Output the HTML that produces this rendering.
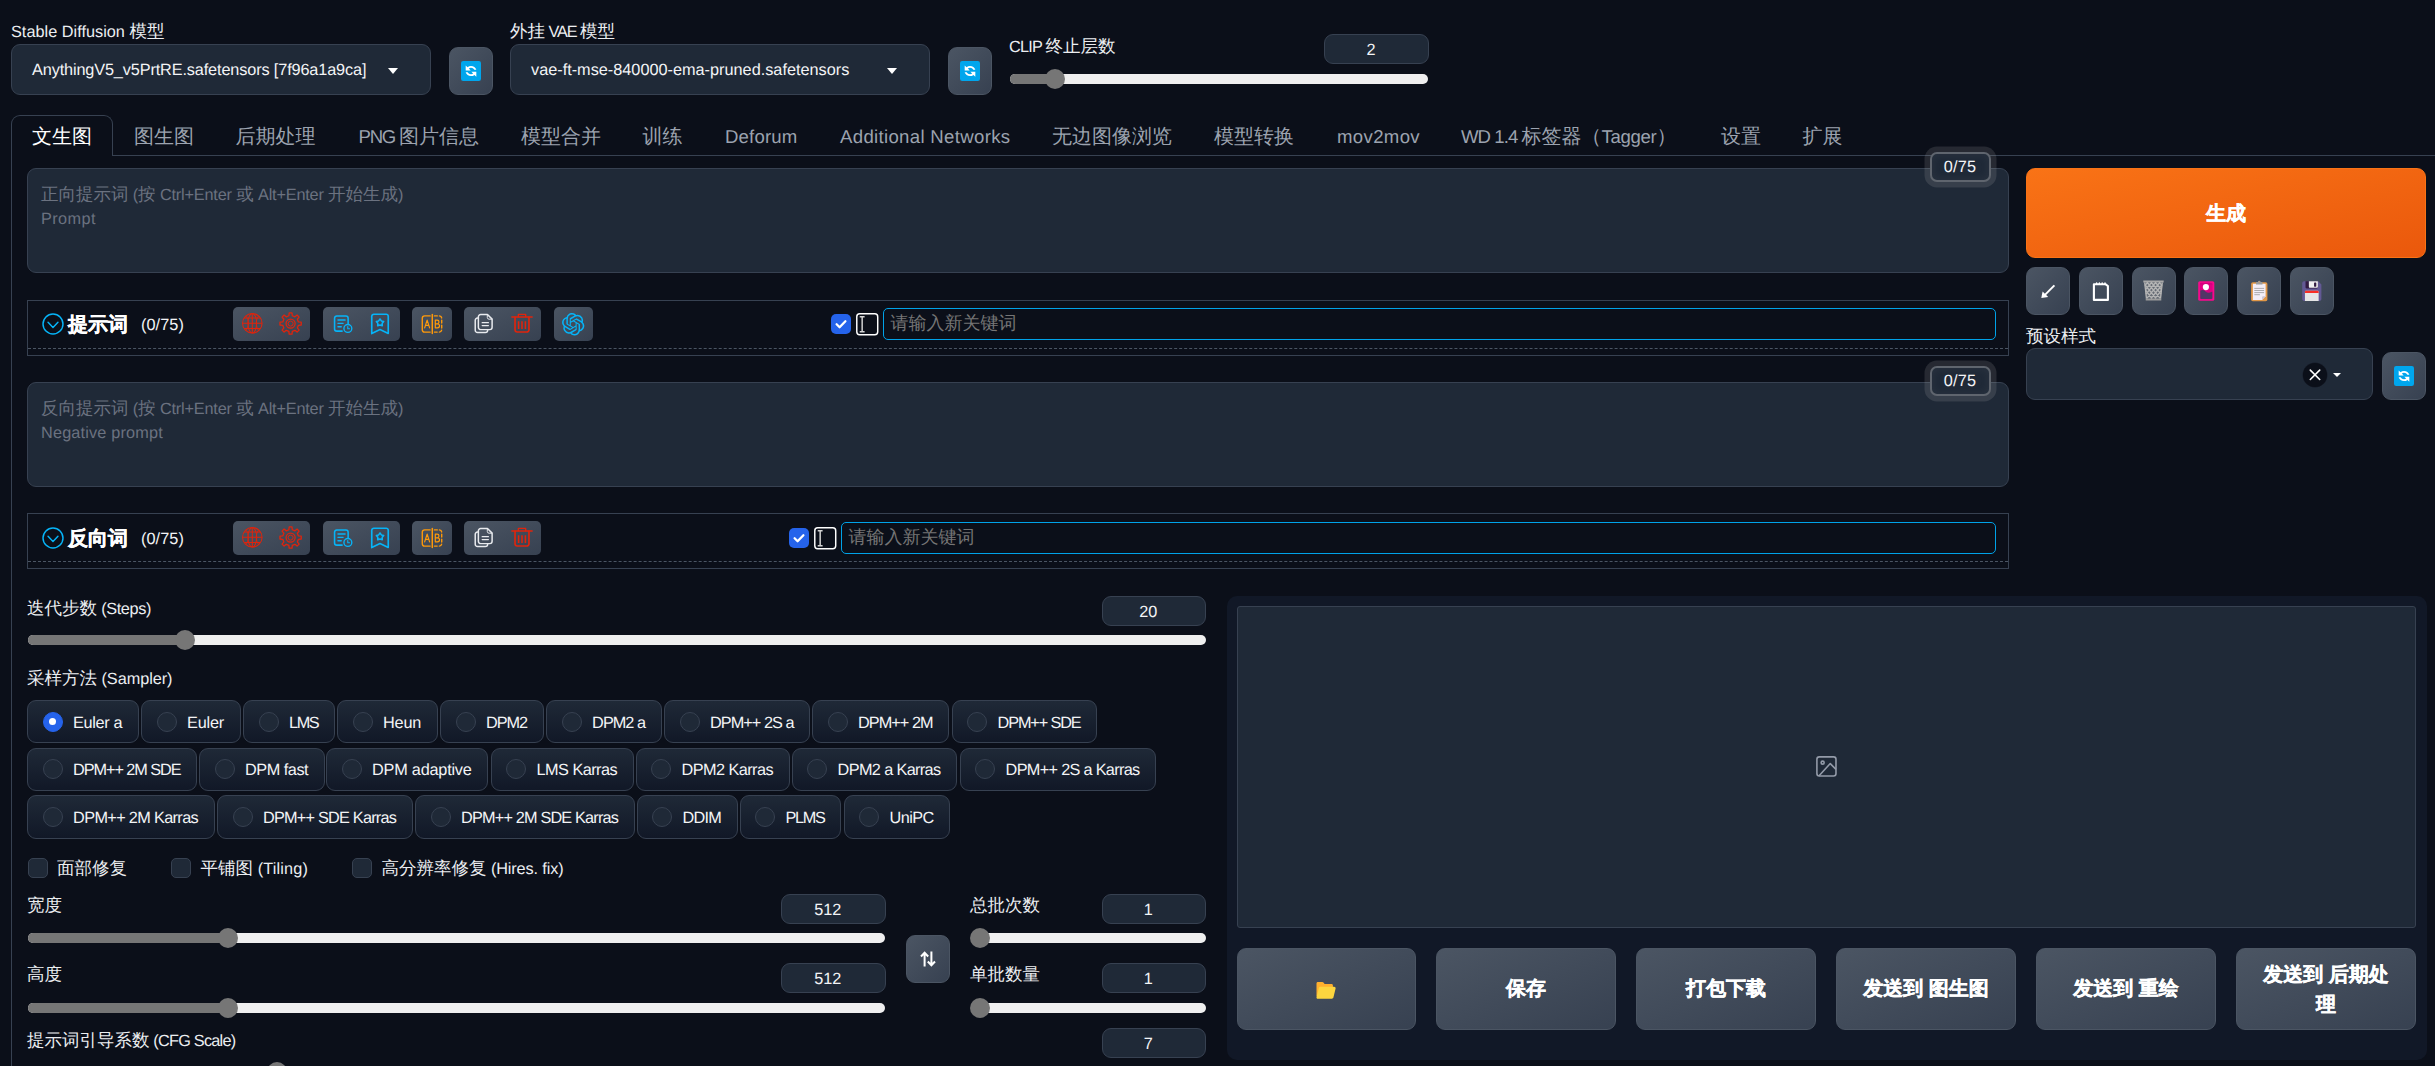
<!DOCTYPE html><html lang="zh"><head><meta charset="utf-8"><title>Stable Diffusion</title><style>
*{box-sizing:border-box;margin:0;padding:0}
html,body{width:2435px;height:1066px;overflow:hidden;background:#0b0f19}
body{position:relative;text-rendering:geometricPrecision;font-family:"Liberation Sans",sans-serif;color:#f3f4f6;font-size:17.5px;line-height:1}
.a{position:absolute;white-space:nowrap}
.lbl{position:absolute;white-space:nowrap;font-size:17.5px;line-height:24px;color:#eceef1}
.inp{position:absolute;background:#1f2937;border:1px solid #374151;border-radius:9px}
.num{position:absolute;padding-right:11px;background:#1f2937;border:1px solid #374151;border-radius:9px;text-align:center;font-size:17.5px;line-height:28px;color:#f3f4f6;height:30px}
.btn{position:absolute;border:1px solid #4b5563;border-radius:9px;background:linear-gradient(to bottom right,#4b5563,#374151)}
.tab{position:absolute;top:116.5px;height:41px;font-size:20px;line-height:40px;color:#9ca3af;white-space:nowrap}
.trk{position:absolute;height:10px;border-radius:5px;background:#efefef}
.fil{position:absolute;height:10px;border-radius:5px;background:#767676}
.thb{position:absolute;width:20px;height:20px;border-radius:50%;background:#767676}
.chip{position:absolute;height:43px;border:1px solid #374151;border-radius:9px;background:linear-gradient(to top,#111827,#1f2937);font-size:17.5px;line-height:41px;white-space:nowrap;color:#f3f4f6}
.chip i{position:absolute;left:14.5px;top:10.5px;width:20px;height:20px;border-radius:50%;border:1px solid #374151;background:#1f2937}
.chip i.on{background:#2563eb;border-color:#2563eb}
.chip i.on:after{content:"";position:absolute;left:5.5px;top:5.5px;width:7px;height:7px;border-radius:50%;background:#fff}
.chip span.t{position:absolute;left:45px;top:.7px}
.cb{position:absolute;width:20px;height:20px;border:1px solid #374151;border-radius:5px;background:#1f2937}
.ph{position:absolute;white-space:nowrap;font-size:17.5px;line-height:24.5px;color:#6b7280}
.grp{position:absolute;height:34px;border-radius:5px;background:linear-gradient(to bottom right,#4b5563,#374151)}
.big{position:absolute;-webkit-text-stroke:.35px #fff;border:1px solid #4b5563;border-radius:9px;background:linear-gradient(to bottom right,#4b5563,#374151);color:#fff;font-weight:bold;font-size:20px;text-align:center;white-space:nowrap}
svg{position:absolute;overflow:visible}
</style></head><body>
<div class="lbl" style="left:11px;top:19px"><span style="font-size:16.28px;letter-spacing:0.017px">Stable Diffusion </span>模型</div>
<div class="inp" style="left:11px;top:44px;width:420px;height:51px"></div>
<div class="a" style="left:32px;top:57px;font-size:17.5px;line-height:24px;color:#f3f4f6"><span style="font-size:16.28px;letter-spacing:-0.132px">AnythingV5_v5PrtRE.safetensors [7f96a1a9ca]</span></div>
<div class="a" style="left:388px;top:68px;width:0;height:0;border-left:5.5px solid transparent;border-right:5.5px solid transparent;border-top:6px solid #fff"></div>
<div class="btn" style="left:449px;top:47px;width:44px;height:48px"></div>
<svg style="left:460.5px;top:61px" width="20" height="20" viewBox="0 0 32 32"><rect x="0" y="0" width="32" height="32" rx="3.5" fill="#00a6ed"/><path d="M7.5 7v8h8l-2.9-2.9c.9-.8 2.1-1.2 3.4-1.2 2.300 0 4.300 1.300 5.300 3.200h3.300c-1.200-3.600-4.600-6.200-8.600-6.200-2.100 0-4 .7-5.500 1.900z" fill="#fff"/><path d="M24.500 25v-8h-8l2.900 2.900c-.9.800-2.100 1.200-3.400 1.200-2.300 0-4.300-1.300-5.300-3.200h-3.300c1.200 3.600 4.600 6.200 8.600 6.200 2.100 0 4-.7 5.500-1.900z" fill="#fff"/></svg>
<div class="lbl" style="left:510px;top:19px">外挂<span style="font-size:16.28px;letter-spacing:-1.081px"> VAE </span>模型</div>
<div class="inp" style="left:510px;top:44px;width:420px;height:51px"></div>
<div class="a" style="left:531px;top:57px;font-size:17.5px;line-height:24px;color:#f3f4f6"><span style="font-size:16.28px;letter-spacing:0.002px">vae-ft-mse-840000-ema-pruned.safetensors</span></div>
<div class="a" style="left:887px;top:68px;width:0;height:0;border-left:5.5px solid transparent;border-right:5.5px solid transparent;border-top:6px solid #fff"></div>
<div class="btn" style="left:948px;top:47px;width:44px;height:48px"></div>
<svg style="left:959.5px;top:61px" width="20" height="20" viewBox="0 0 32 32"><rect x="0" y="0" width="32" height="32" rx="3.5" fill="#00a6ed"/><path d="M7.5 7v8h8l-2.9-2.9c.9-.8 2.1-1.2 3.4-1.2 2.300 0 4.300 1.300 5.300 3.200h3.300c-1.200-3.600-4.600-6.200-8.600-6.200-2.100 0-4 .7-5.500 1.900z" fill="#fff"/><path d="M24.500 25v-8h-8l2.900 2.900c-.9.800-2.100 1.200-3.400 1.200-2.300 0-4.300-1.300-5.300-3.200h-3.300c1.200 3.600 4.600 6.200 8.600 6.200 2.100 0 4-.7 5.500-1.900z" fill="#fff"/></svg>
<div class="lbl" style="left:1009px;top:34px"><span style="font-size:16.28px;letter-spacing:-0.782px">CLIP </span>终止层数</div>
<div class="num" style="left:1324px;top:34px;width:105px"><span style="font-size:16.28px;letter-spacing:0.000px">2</span></div>
<div class="trk" style="left:1010px;top:74px;width:418px"></div>
<div class="fil" style="left:1010px;top:74px;width:45px"></div>
<div class="thb" style="left:1045px;top:69px"></div>
<div class="a" style="left:11px;top:155px;width:2424px;height:1px;background:#374151"></div>
<div class="a" style="left:11px;top:155px;width:1px;height:911px;background:#374151"></div>
<div class="a" style="left:11px;top:115px;width:102px;height:41px;border:1px solid #374151;border-bottom:none;border-radius:9px 9px 0 0;background:#0b0f19"></div>
<div class="tab" style="left:32px;color:#fff">文生图</div>
<div class="tab" style="left:134px">图生图</div>
<div class="tab" style="left:235.5px">后期处理</div>
<div class="tab" style="left:358.5px"><span style="font-size:18.60px;letter-spacing:-1.244px">PNG </span>图片信息</div>
<div class="tab" style="left:521px">模型合并</div>
<div class="tab" style="left:642.5px">训练</div>
<div class="tab" style="left:725px"><span style="font-size:18.60px;letter-spacing:0.168px">Deforum</span></div>
<div class="tab" style="left:840px"><span style="font-size:18.60px;letter-spacing:0.322px">Additional Networks</span></div>
<div class="tab" style="left:1052px">无边图像浏览</div>
<div class="tab" style="left:1214px">模型转换</div>
<div class="tab" style="left:1337px"><span style="font-size:18.60px;letter-spacing:0.339px">mov2mov</span></div>
<div class="tab" style="left:1461px"><span style="font-size:18.60px;letter-spacing:-0.954px">WD 1.4 </span>标签器（<span style="font-size:18.60px;letter-spacing:-0.312px">Tagger</span>）</div>
<div class="tab" style="left:1721px">设置</div>
<div class="tab" style="left:1802.5px">扩展</div>
<div class="inp" style="left:27px;top:168px;width:1982px;height:105px"></div>
<div class="ph" style="left:41px;top:181.5px">正向提示词<span style="font-size:16.28px;letter-spacing:-0.179px"> (</span>按<span style="font-size:16.28px;letter-spacing:-0.179px"> Ctrl+Enter </span>或<span style="font-size:16.28px;letter-spacing:-0.179px"> Alt+Enter </span>开始生成<span style="font-size:16.28px;letter-spacing:-0.179px">)</span></div>
<div class="ph" style="left:41px;top:206px"><span style="font-size:16.28px;letter-spacing:0.424px">Prompt</span></div>
<div class="a" style="left:1929.500px;top:152.3px;width:61px;height:29.500px;border:2px solid rgba(192,192,192,.4);border-radius:7px;background:#1f2937;box-shadow:0 0 0 5.5px rgba(192,192,192,.15),inset 0 0 10px rgba(192,192,192,.075);text-align:center;font-size:17.5px;line-height:25.500px;color:#f3f4f6"><span style="font-size:16.28px;letter-spacing:0.206px">0/75</span></div>
<div class="inp" style="left:27px;top:382px;width:1982px;height:105px"></div>
<div class="ph" style="left:41px;top:395.5px">反向提示词<span style="font-size:16.28px;letter-spacing:-0.179px"> (</span>按<span style="font-size:16.28px;letter-spacing:-0.179px"> Ctrl+Enter </span>或<span style="font-size:16.28px;letter-spacing:-0.179px"> Alt+Enter </span>开始生成<span style="font-size:16.28px;letter-spacing:-0.179px">)</span></div>
<div class="ph" style="left:41px;top:420px"><span style="font-size:16.28px;letter-spacing:0.173px">Negative prompt</span></div>
<div class="a" style="left:1929.500px;top:366.3px;width:61px;height:29.500px;border:2px solid rgba(192,192,192,.4);border-radius:7px;background:#1f2937;box-shadow:0 0 0 5.5px rgba(192,192,192,.15),inset 0 0 10px rgba(192,192,192,.075);text-align:center;font-size:17.5px;line-height:25.500px;color:#f3f4f6"><span style="font-size:16.28px;letter-spacing:0.206px">0/75</span></div>
<div class="a" style="left:27px;top:300px;width:1982px;height:56px;border:1px solid #374151"></div>
<div class="a" style="left:28px;top:348px;width:1980px;height:0;border-top:1px dashed #4b5563"></div>
<svg style="left:42.2px;top:312.7px" width="22" height="22" viewBox="0 0 24 24"><circle cx="12" cy="12" r="10.9" fill="none" stroke="#06b4f8" stroke-width="1.6"/><path d="M6.6 10.2 L12 15.8 L17.4 10.2" fill="none" stroke="#06b4f8" stroke-width="1.6" stroke-linecap="round" stroke-linejoin="round"/></svg>
<div class="a" style="left:68px;top:310.7px;font-size:20px;line-height:28px;font-weight:bold;-webkit-text-stroke:.35px #fff;color:#fff">提示词</div>
<div class="a" style="left:141px;top:311.7px;font-size:17.5px;line-height:24px;color:#f3f4f6"><span style="font-size:16.28px;letter-spacing:0.080px">(0/75)</span></div>
<div class="grp" style="left:233px;top:307px;width:77px"></div>
<div class="grp" style="left:323px;top:307px;width:77px"></div>
<div class="grp" style="left:412px;top:307px;width:40px"></div>
<div class="grp" style="left:464px;top:307px;width:77px"></div>
<div class="grp" style="left:554px;top:307px;width:39px"></div>
<svg style="left:241.3px;top:312.3px" width="22.6" height="22.6" viewBox="0 0 24 24"><g fill="none" stroke="#e0240c" stroke-width="1.1"><circle cx="12" cy="12" r="10.4"/><ellipse cx="12" cy="12" rx="4.6" ry="10.4"/><path d="M12 1.600v20.800M1.600 12h20.800M3.400 6.400h17.200M3.400 17.600h17.200"/><path d="M5.200 4.200c3.500 4.600 3.500 11 0 15.600M18.800 4.200c-3.500 4.600-3.500 11 0 15.600" stroke-width=".9"/></g></svg>
<svg style="left:278.9px;top:312.3px" width="23.2" height="23.2" viewBox="0 0 24 24"><g fill="none" stroke="#e0240c" stroke-width="1.35" stroke-linejoin="round"><path d="M10.25 3.89 L10.52 1.00 L13.48 1.00 L13.75 3.89 L16.50 5.03 L18.73 3.18 L20.82 5.27 L18.97 7.50 L20.11 10.25 L23.00 10.52 L23.00 13.48 L20.11 13.75 L18.97 16.50 L20.82 18.73 L18.73 20.82 L16.50 18.97 L13.75 20.11 L13.48 23.00 L10.52 23.00 L10.25 20.11 L7.50 18.97 L5.27 20.82 L3.18 18.73 L5.03 16.50 L3.89 13.75 L1.00 13.48 L1.00 10.52 L3.89 10.25 L5.03 7.50 L3.18 5.27 L5.27 3.18 L7.50 5.03Z"/><circle cx="12" cy="12" r="4.7"/><circle cx="12" cy="12" r="2.6" stroke-width="1"/></g></svg>
<svg style="left:332.2px;top:312.7px" width="22" height="22" viewBox="0 0 24 24"><g fill="none" stroke="#06b4f8" stroke-width="1.7" stroke-linecap="round" stroke-linejoin="round"><path d="M11 19.800H5.200a2.400 2.400 0 0 1-2.400-2.400V5.600a2.400 2.400 0 0 1 2.400-2.400h10a2.400 2.400 0 0 1 2.400 2.400v6"/><path d="M6.500 7.600h7.800M6.500 11.300h5.600M6.500 15h3.600" stroke-width="1.5"/><circle cx="17.300" cy="16.900" r="4.300" stroke-width="1.500"/><path d="M17.200 14.800v2.400h1.900" stroke-width="1.200"/></g></svg>
<svg style="left:369px;top:312.7px" width="22" height="22" viewBox="0 0 24 24"><g fill="none" stroke="#06b4f8" stroke-width="1.8" stroke-linejoin="round"><path d="M3 22.400V3.600a2.200 2.200 0 0 1 2.200-2.200h13.600a2.200 2.200 0 0 1 2.200 2.200v18.800l-9-4.300z"/><path d="M12 6.500l1.500 2.100 2.500.7-1.600 2 .1 2.600-2.500-.9-2.500.9.100-2.600-1.600-2 2.500-.7z" stroke-width="1.700"/></g></svg>
<svg style="left:421px;top:312.7px" width="22" height="22" viewBox="0 0 24 24"><g fill="none" stroke="#ff9a0a" stroke-width="1.5" stroke-linecap="round" stroke-linejoin="round"><path d="M10 3.200H4a2.600 2.600 0 0 0-2.600 2.600v12.400A2.600 2.600 0 0 0 4 20.800h6"/><path d="M12.300 1.700v20.600" stroke-width="1.600"/><path d="M14.600 3.200h5.400a2.600 2.600 0 0 1 2.600 2.600v12.400a2.600 2.600 0 0 1-2.600 2.600h-5.400" stroke-dasharray="3.200 2.300"/><path d="M4 16.200l2.700-8.400 2.700 8.400M4.900 13.500h3.600" stroke-width="1.300"/><path d="M15.600 7.800v8.400h2.400a2.200 2.200 0 0 0 0-4.400h-2.400h2a2 2 0 0 0 0-4z" stroke-width="1.300"/></g></svg>
<svg style="left:473.8px;top:313.2px" width="21" height="21" viewBox="0 0 24 24"><g fill="none" stroke="#e8eaee" stroke-width="1.7" stroke-linecap="round" stroke-linejoin="round"><path d="M7.600 1.700h7.800l5.300 5.300v9.400a2.600 2.600 0 0 1-2.600 2.600H7.600a2.600 2.600 0 0 1-2.600-2.600V4.300a2.600 2.600 0 0 1 2.600-2.600z"/><path d="M15.200 1.900v3.200a2 2 0 0 0 2 2h3.200" stroke-width="1.100"/><path d="M5 5.800H4a2.600 2.600 0 0 0-2.600 2.600v11.300A2.600 2.600 0 0 0 4 22.300h9a2.600 2.600 0 0 0 2.600-2.600V19" /><path d="M9.400 11h7M9.400 14.400h7" stroke-width="1.600"/></g></svg>
<svg style="left:510.5px;top:312.2px" width="22" height="22" viewBox="0 0 24 24"><g fill="none" stroke="#e0240c" stroke-width="1.8" stroke-linecap="round" stroke-linejoin="round"><path d="M1 5.400h22"/><path d="M8 5.200V2.600h8v2.600" stroke-width="1.500"/><path d="M4.400 5.600v13.800a2.400 2.400 0 0 0 2.400 2.400h10.400a2.400 2.400 0 0 0 2.400-2.400V5.600"/><path d="M8.300 10v8.600M12 10v8.600M15.700 10v8.600" stroke-width="1.700" stroke-linecap="butt"/></g></svg>
<svg style="left:562.2px;top:312.5px" width="22.4" height="22.4" viewBox="0 0 24 24"><path d="M22.2819 9.8211a5.9847 5.9847 0 0 0-.5157-4.9108 6.0462 6.0462 0 0 0-6.5098-2.9A6.0651 6.0651 0 0 0 4.9807 4.1818a5.9847 5.9847 0 0 0-3.9977 2.9 6.0462 6.0462 0 0 0 .7427 7.0966 5.98 5.98 0 0 0 .511 4.9107 6.051 6.051 0 0 0 6.5146 2.9001A5.9847 5.9847 0 0 0 13.2599 24a6.0557 6.0557 0 0 0 5.7718-4.2058 5.9894 5.9894 0 0 0 3.9977-2.9001 6.0557 6.0557 0 0 0-.7475-7.0729zm-9.022 12.6081a4.4755 4.4755 0 0 1-2.8764-1.0408l.1419-.0804 4.7783-2.7582a.7948.7948 0 0 0 .3927-.6813v-6.7369l2.02 1.1686a.071.071 0 0 1 .038.052v5.5826a4.504 4.504 0 0 1-4.4945 4.4944zm-9.6607-4.1254a4.4708 4.4708 0 0 1-.5346-3.0137l.142.0852 4.783 2.7582a.7712.7712 0 0 0 .7806 0l5.8428-3.3685v2.3324a.0804.0804 0 0 1-.0332.0615L9.74 19.9502a4.4992 4.4992 0 0 1-6.1408-1.6464zM2.3408 7.8956a4.485 4.485 0 0 1 2.3655-1.9728V11.6a.7664.7664 0 0 0 .3879.6765l5.8144 3.3543-2.0201 1.1685a.0757.0757 0 0 1-.071 0l-4.8303-2.7865A4.504 4.504 0 0 1 2.3408 7.872zm16.5963 3.8558L13.1038 8.364 15.1192 7.2a.0757.0757 0 0 1 .071 0l4.8303 2.7913a4.4944 4.4944 0 0 1-.6765 8.1042v-5.6772a.79.79 0 0 0-.407-.667zm2.0107-3.0231l-.142-.0852-4.7735-2.7818a.7759.7759 0 0 0-.7854 0L9.409 9.2297V6.8974a.0662.0662 0 0 1 .0284-.0615l4.8303-2.7866a4.4992 4.4992 0 0 1 6.6802 4.66zM8.3065 12.863l-2.02-1.1638a.0804.0804 0 0 1-.038-.0567V6.0742a4.4992 4.4992 0 0 1 7.3757-3.4537l-.142.0805L8.704 5.459a.7948.7948 0 0 0-.3927.6813zm1.0976-2.3654l2.602-1.4998 2.6069 1.4998v2.9994l-2.5974 1.4997-2.6067-1.4997Z" fill="#06b4f8"/></svg>
<div class="a" style="left:831px;top:313.7px;width:20px;height:20px;border-radius:5px;background:#2563eb"></div>
<svg style="left:831px;top:313.7px" width="20" height="20" viewBox="0 0 20 20"><path d="M5.600 10.300l3 3 5.800-6" fill="none" stroke="#fff" stroke-width="2.300" stroke-linecap="round" stroke-linejoin="round"/></svg>
<svg style="left:856px;top:312.9px" width="22.500" height="22.500" viewBox="0 0 23 23"><rect x=".8" y=".8" width="21.400" height="21.400" rx="3" fill="none" stroke="#fff" stroke-width="1.500"/><path d="M3.800 3.800h5M6.300 3.800v15.400M3.800 19.200h5" fill="none" stroke="#d4d4d4" stroke-width="1.500"/></svg>
<div class="a" style="left:883px;top:307.5px;width:1112.5px;height:32.500px;border:1.500px solid #00a2e8;border-radius:5px;background:#0b0f19"></div>
<div class="a" style="left:890.5px;top:310.7px;font-size:18px;line-height:24px;color:#757575">请输入新关键词</div>
<div class="a" style="left:27px;top:513px;width:1982px;height:56px;border:1px solid #374151"></div>
<div class="a" style="left:28px;top:561px;width:1980px;height:0;border-top:1px dashed #4b5563"></div>
<svg style="left:42.2px;top:526.7px" width="22" height="22" viewBox="0 0 24 24"><circle cx="12" cy="12" r="10.9" fill="none" stroke="#06b4f8" stroke-width="1.6"/><path d="M6.6 10.2 L12 15.8 L17.4 10.2" fill="none" stroke="#06b4f8" stroke-width="1.6" stroke-linecap="round" stroke-linejoin="round"/></svg>
<div class="a" style="left:68px;top:524.7px;font-size:20px;line-height:28px;font-weight:bold;-webkit-text-stroke:.35px #fff;color:#fff">反向词</div>
<div class="a" style="left:141px;top:525.7px;font-size:17.5px;line-height:24px;color:#f3f4f6"><span style="font-size:16.28px;letter-spacing:0.080px">(0/75)</span></div>
<div class="grp" style="left:233px;top:521px;width:77px"></div>
<div class="grp" style="left:323px;top:521px;width:77px"></div>
<div class="grp" style="left:412px;top:521px;width:40px"></div>
<div class="grp" style="left:464px;top:521px;width:77px"></div>
<svg style="left:241.3px;top:526.3px" width="22.6" height="22.6" viewBox="0 0 24 24"><g fill="none" stroke="#e0240c" stroke-width="1.1"><circle cx="12" cy="12" r="10.4"/><ellipse cx="12" cy="12" rx="4.6" ry="10.4"/><path d="M12 1.600v20.800M1.600 12h20.800M3.400 6.400h17.200M3.400 17.600h17.200"/><path d="M5.200 4.200c3.500 4.600 3.500 11 0 15.600M18.800 4.200c-3.500 4.600-3.500 11 0 15.600" stroke-width=".9"/></g></svg>
<svg style="left:278.9px;top:526.3px" width="23.2" height="23.2" viewBox="0 0 24 24"><g fill="none" stroke="#e0240c" stroke-width="1.35" stroke-linejoin="round"><path d="M10.25 3.89 L10.52 1.00 L13.48 1.00 L13.75 3.89 L16.50 5.03 L18.73 3.18 L20.82 5.27 L18.97 7.50 L20.11 10.25 L23.00 10.52 L23.00 13.48 L20.11 13.75 L18.97 16.50 L20.82 18.73 L18.73 20.82 L16.50 18.97 L13.75 20.11 L13.48 23.00 L10.52 23.00 L10.25 20.11 L7.50 18.97 L5.27 20.82 L3.18 18.73 L5.03 16.50 L3.89 13.75 L1.00 13.48 L1.00 10.52 L3.89 10.25 L5.03 7.50 L3.18 5.27 L5.27 3.18 L7.50 5.03Z"/><circle cx="12" cy="12" r="4.7"/><circle cx="12" cy="12" r="2.6" stroke-width="1"/></g></svg>
<svg style="left:332.2px;top:526.7px" width="22" height="22" viewBox="0 0 24 24"><g fill="none" stroke="#06b4f8" stroke-width="1.7" stroke-linecap="round" stroke-linejoin="round"><path d="M11 19.800H5.200a2.400 2.400 0 0 1-2.400-2.400V5.600a2.400 2.400 0 0 1 2.400-2.400h10a2.400 2.400 0 0 1 2.400 2.400v6"/><path d="M6.500 7.600h7.800M6.500 11.300h5.600M6.500 15h3.600" stroke-width="1.5"/><circle cx="17.300" cy="16.900" r="4.300" stroke-width="1.500"/><path d="M17.200 14.800v2.400h1.900" stroke-width="1.200"/></g></svg>
<svg style="left:369px;top:526.7px" width="22" height="22" viewBox="0 0 24 24"><g fill="none" stroke="#06b4f8" stroke-width="1.8" stroke-linejoin="round"><path d="M3 22.400V3.600a2.200 2.200 0 0 1 2.200-2.200h13.600a2.200 2.200 0 0 1 2.200 2.200v18.800l-9-4.300z"/><path d="M12 6.500l1.500 2.100 2.500.7-1.600 2 .1 2.600-2.500-.9-2.500.9.100-2.600-1.600-2 2.500-.7z" stroke-width="1.700"/></g></svg>
<svg style="left:421px;top:526.7px" width="22" height="22" viewBox="0 0 24 24"><g fill="none" stroke="#ff9a0a" stroke-width="1.5" stroke-linecap="round" stroke-linejoin="round"><path d="M10 3.200H4a2.600 2.600 0 0 0-2.600 2.600v12.400A2.600 2.600 0 0 0 4 20.800h6"/><path d="M12.300 1.700v20.600" stroke-width="1.600"/><path d="M14.600 3.200h5.400a2.600 2.600 0 0 1 2.600 2.600v12.400a2.600 2.600 0 0 1-2.600 2.600h-5.400" stroke-dasharray="3.200 2.300"/><path d="M4 16.200l2.700-8.400 2.700 8.400M4.900 13.500h3.600" stroke-width="1.300"/><path d="M15.600 7.800v8.400h2.400a2.200 2.200 0 0 0 0-4.400h-2.400h2a2 2 0 0 0 0-4z" stroke-width="1.300"/></g></svg>
<svg style="left:473.8px;top:527.2px" width="21" height="21" viewBox="0 0 24 24"><g fill="none" stroke="#e8eaee" stroke-width="1.7" stroke-linecap="round" stroke-linejoin="round"><path d="M7.600 1.700h7.800l5.300 5.300v9.400a2.600 2.600 0 0 1-2.600 2.600H7.600a2.600 2.600 0 0 1-2.600-2.600V4.300a2.600 2.600 0 0 1 2.600-2.600z"/><path d="M15.200 1.900v3.200a2 2 0 0 0 2 2h3.200" stroke-width="1.100"/><path d="M5 5.800H4a2.600 2.600 0 0 0-2.600 2.600v11.300A2.600 2.600 0 0 0 4 22.300h9a2.600 2.600 0 0 0 2.600-2.600V19" /><path d="M9.400 11h7M9.400 14.400h7" stroke-width="1.600"/></g></svg>
<svg style="left:510.5px;top:526.2px" width="22" height="22" viewBox="0 0 24 24"><g fill="none" stroke="#e0240c" stroke-width="1.8" stroke-linecap="round" stroke-linejoin="round"><path d="M1 5.400h22"/><path d="M8 5.200V2.600h8v2.600" stroke-width="1.500"/><path d="M4.400 5.600v13.800a2.400 2.400 0 0 0 2.400 2.400h10.400a2.400 2.400 0 0 0 2.400-2.400V5.600"/><path d="M8.300 10v8.600M12 10v8.600M15.700 10v8.600" stroke-width="1.700" stroke-linecap="butt"/></g></svg>
<div class="a" style="left:789px;top:527.7px;width:20px;height:20px;border-radius:5px;background:#2563eb"></div>
<svg style="left:789px;top:527.7px" width="20" height="20" viewBox="0 0 20 20"><path d="M5.600 10.300l3 3 5.800-6" fill="none" stroke="#fff" stroke-width="2.300" stroke-linecap="round" stroke-linejoin="round"/></svg>
<svg style="left:814px;top:526.9px" width="22.500" height="22.500" viewBox="0 0 23 23"><rect x=".8" y=".8" width="21.400" height="21.400" rx="3" fill="none" stroke="#fff" stroke-width="1.500"/><path d="M3.800 3.800h5M6.300 3.800v15.400M3.800 19.200h5" fill="none" stroke="#d4d4d4" stroke-width="1.500"/></svg>
<div class="a" style="left:841px;top:521.5px;width:1154.5px;height:32.500px;border:1.500px solid #00a2e8;border-radius:5px;background:#0b0f19"></div>
<div class="a" style="left:848.5px;top:524.7px;font-size:18px;line-height:24px;color:#757575">请输入新关键词</div>
<div class="a" style="left:2026px;top:168px;width:400px;height:90px;border:1px solid #f97316;border-radius:9px;background:linear-gradient(to bottom right,#f97316,#ea580c);color:#fff;font-weight:bold;font-size:20px;line-height:90.800px;-webkit-text-stroke:.35px #fff;text-align:center">生成</div>
<div class="btn" style="left:2026px;top:267px;width:44px;height:48px"></div>
<div class="btn" style="left:2079px;top:267px;width:44px;height:48px"></div>
<div class="btn" style="left:2132px;top:267px;width:44px;height:48px"></div>
<div class="btn" style="left:2184px;top:267px;width:44px;height:48px"></div>
<div class="btn" style="left:2237px;top:267px;width:44px;height:48px"></div>
<div class="btn" style="left:2290px;top:267px;width:44px;height:48px"></div>
<svg style="left:2038px;top:281px" width="20" height="20" viewBox="0 0 20 20"><path d="M16.400 4.400L6.200 14.600" stroke="#fff" stroke-width="2" fill="none"/><path d="M3.300 17.100l1.300-6.500 5.600 5.500z" fill="#fff"/></svg>
<svg style="left:2092px;top:282px" width="18" height="20" viewBox="0 0 18 20"><path d="M1.900 2.300h11.800l2.200 1.700v13.900H1.900z" fill="none" stroke="#fff" stroke-width="2.100" stroke-linejoin="round"/><path d="M4.600 .900v1.300M7.400 .900v1.300M10.200 .900v1.300M13 .900v1.300" stroke="#fff" stroke-width="1.500" stroke-linecap="round"/></svg>
<svg style="left:2143px;top:280.300px" width="21" height="21" viewBox="0 0 21 21"><path d="M.3 .5h20.400v2H.3z" fill="#a8a8a8"/><path d="M1.200 2.500h18.600l-1.800 16H3z" fill="#9a9a9a" opacity=".42"/><g stroke="#b4b4b4" stroke-width="1.300" fill="none"><path d="M1.700 2.500l1.800 16.100M19.300 2.500l-1.800 16.100"/><path d="M4.300 2.500l12.900 15.800M8.400 2.500l9.600 11.700M12.500 2.500l6.100 7.400M16.600 2.500l2.300 2.800M2.100 5l11 13.500M2.700 10.500l6.400 8M16.700 2.500L3.800 18.300M12.600 2.500L3 14.200M8.500 2.500L2.400 9.900M4.400 2.500L2.100 5.300M18.900 5L7.900 18.500M18.300 10.500l-6.400 8"/></g><path d="M2.700 18.500h15.600v2H2.700z" fill="#9c9c9c"/></svg>
<svg style="left:2198px;top:281px" width="16.500" height="20" viewBox="0 0 16.500 20"><rect x=".2" y=".2" width="16.100" height="19.600" rx="1.600" fill="#f70a8d"/><rect x="1.900" y="1.700" width="12.700" height="16.600" rx="1.300" fill="#e10083"/><path d="M2.300 9.600c2-.9 3.600-.6 5.200.8 1.200 1 2.400 1.500 3.600 1.300 1.300-.2 2.300-.7 3.200-1.200v6.400c0 .7-.5 1.200-1.200 1.200H3.500c-.7 0-1.200-.5-1.200-1.200z" fill="#533566"/><path d="M2.900 2.300h10.700c.4 0 .7.300.7.700v.4H2.200V3c0-.4.300-.7.700-.7z" fill="#c4007a" opacity=".6"/><circle cx="7.900" cy="6.100" r="3.100" fill="#fff"/></svg>
<svg style="left:2251px;top:281px" width="16.500" height="20.500" viewBox="0 0 16.500 20.500"><rect x=".1" y="1.300" width="16.300" height="19" rx="1.700" fill="#e19747"/><path d="M1.900 2.700h12.700v12.600l-3.500 3.700H1.900z" fill="#f3eef8"/><path d="M14.600 15.300l-3.500 3.700v-2.500c0-.7.500-1.200 1.200-1.200z" fill="#cdc4d6"/><path d="M3.300 7.400h9.800M3.300 9.500h9.800M3.300 11.600h9.800M3.300 13.700h5.600" stroke="#9b9b9b" stroke-width=".8"/><path d="M6.900 1.100a1.350 1.350 0 0 1 2.700 0h1.200c.4 0 .7.300.7.700v1.600H5v-1.600c0-.4.300-.7.700-.7z" fill="#9b9b9b"/><circle cx="8.250" cy="1" r=".55" fill="#e19747"/></svg>
<svg style="left:2301.700px;top:280.700px" width="19.600" height="20.400" viewBox="0 0 20 21" preserveAspectRatio="none"><path d="M2.200 .3h14.300l3.300 3.300v15c0 1.100-.9 2-2 2H2.200c-1.100 0-2-.9-2-2V2.300c0-1.100.9-2 2-2z" fill="#635994"/><path d="M3.600 .3h12.600v6.200c0 .6-.5 1.100-1.100 1.100H4.700c-.6 0-1.100-.5-1.100-1.100z" fill="#321b41"/><path d="M7 .3h9.200v5.600c0 .6-.5 1.100-1.100 1.100H8.100c-.6 0-1.100-.5-1.100-1.100z" fill="#f0f0f0"/><rect x="12.300" y="1.500" width="2.300" height="4.300" rx=".5" fill="#321b41"/><path d="M3 11.200c0-.6.500-1.100 1.100-1.100h11.800c.6 0 1.100.5 1.100 1.100v9.400H3z" fill="#e6e6e6"/><path d="M3 11.200c0-.6.500-1.100 1.100-1.100h11.800c.6 0 1.100.5 1.100 1.100v1.100H3z" fill="#f92f26"/></svg>
<div class="lbl" style="left:2026px;top:323.500px">预设样式</div>
<div class="inp" style="left:2026px;top:348px;width:347px;height:52px"></div>
<div class="a" style="left:2303px;top:362.500px;width:24px;height:24px;border-radius:50%;background:#0b0f19;box-shadow:0 0 0 .5px #161c28"></div>
<svg style="left:2303px;top:362.500px" width="24" height="24" viewBox="0 0 24 24"><path d="M7.300 7.100l9.400 9.400M16.700 7.100l-9.400 9.400" stroke="#fff" stroke-width="1.600" stroke-linecap="round"/></svg>
<div class="a" style="left:2333px;top:372.800px;width:0;height:0;border-left:4.200px solid transparent;border-right:4.200px solid transparent;border-top:4.600px solid #fff"></div>
<div class="btn" style="left:2382px;top:352px;width:44px;height:48px"></div>
<svg style="left:2393.5px;top:366px" width="20" height="20" viewBox="0 0 32 32"><rect x="0" y="0" width="32" height="32" rx="3.5" fill="#00a6ed"/><path d="M7.5 7v8h8l-2.9-2.9c.9-.8 2.1-1.2 3.4-1.2 2.300 0 4.300 1.300 5.300 3.200h3.300c-1.200-3.600-4.600-6.200-8.600-6.200-2.100 0-4 .7-5.500 1.900z" fill="#fff"/><path d="M24.500 25v-8h-8l2.900 2.900c-.9.800-2.100 1.200-3.400 1.200-2.300 0-4.300-1.300-5.300-3.200h-3.300c1.200 3.600 4.600 6.200 8.600 6.200 2.100 0 4-.7 5.500-1.900z" fill="#fff"/></svg>
<div class="lbl" style="left:27px;top:596px">迭代步数<span style="font-size:16.28px;letter-spacing:-0.373px"> (Steps)</span></div>
<div class="num" style="left:1101.5px;top:596px;width:104.5px"><span style="font-size:16.28px;letter-spacing:0.000px">20</span></div>
<div class="trk" style="left:27.5px;top:635px;width:1178px"></div>
<div class="fil" style="left:27.5px;top:635px;width:157.5px"></div>
<div class="thb" style="left:175px;top:630px"></div>
<div class="lbl" style="left:27px;top:666px">采样方法<span style="font-size:16.28px;letter-spacing:-0.047px"> (Sampler)</span></div>
<div class="chip" style="left:27.1px;top:700.3px;width:111.9px"><i class="on"></i><span class="t"><span style="font-size:16.28px;letter-spacing:-0.367px">Euler a</span></span></div>
<div class="chip" style="left:141.1px;top:700.3px;width:99.9px"><i></i><span class="t"><span style="font-size:16.28px;letter-spacing:-0.199px">Euler</span></span></div>
<div class="chip" style="left:243.1px;top:700.3px;width:91.9px"><i></i><span class="t"><span style="font-size:16.28px;letter-spacing:-1.488px">LMS</span></span></div>
<div class="chip" style="left:337.1px;top:700.3px;width:100.9px"><i></i><span class="t"><span style="font-size:16.28px;letter-spacing:-0.227px">Heun</span></span></div>
<div class="chip" style="left:440.1px;top:700.3px;width:103.9px"><i></i><span class="t"><span style="font-size:16.28px;letter-spacing:-1.055px">DPM2</span></span></div>
<div class="chip" style="left:546.1px;top:700.3px;width:115.9px"><i></i><span class="t"><span style="font-size:16.28px;letter-spacing:-0.965px">DPM2 a</span></span></div>
<div class="chip" style="left:664.1px;top:700.3px;width:146.4px"><i></i><span class="t"><span style="font-size:16.28px;letter-spacing:-0.968px">DPM++ 2S a</span></span></div>
<div class="chip" style="left:812.1px;top:700.3px;width:137.4px"><i></i><span class="t"><span style="font-size:16.28px;letter-spacing:-0.976px">DPM++ 2M</span></span></div>
<div class="chip" style="left:951.6px;top:700.3px;width:145.9px"><i></i><span class="t"><span style="font-size:16.28px;letter-spacing:-1.129px">DPM++ SDE</span></span></div>
<div class="chip" style="left:27.1px;top:747.8px;width:170.4px"><i></i><span class="t"><span style="font-size:16.28px;letter-spacing:-1.066px">DPM++ 2M SDE</span></span></div>
<div class="chip" style="left:199.1px;top:747.8px;width:125.9px"><i></i><span class="t"><span style="font-size:16.28px;letter-spacing:-0.490px">DPM fast</span></span></div>
<div class="chip" style="left:326.1px;top:747.8px;width:162.4px"><i></i><span class="t"><span style="font-size:16.28px;letter-spacing:-0.227px">DPM adaptive</span></span></div>
<div class="chip" style="left:490.6px;top:747.8px;width:143.4px"><i></i><span class="t"><span style="font-size:16.28px;letter-spacing:-0.542px">LMS Karras</span></span></div>
<div class="chip" style="left:635.6px;top:747.8px;width:154.4px"><i></i><span class="t"><span style="font-size:16.28px;letter-spacing:-0.562px">DPM2 Karras</span></span></div>
<div class="chip" style="left:791.6px;top:747.8px;width:165.9px"><i></i><span class="t"><span style="font-size:16.28px;letter-spacing:-0.635px">DPM2 a Karras</span></span></div>
<div class="chip" style="left:959.6px;top:747.8px;width:196.9px"><i></i><span class="t"><span style="font-size:16.28px;letter-spacing:-0.685px">DPM++ 2S a Karras</span></span></div>
<div class="chip" style="left:27.1px;top:795.3px;width:187.9px;height:43.700px"><i></i><span class="t"><span style="font-size:16.28px;letter-spacing:-0.651px">DPM++ 2M Karras</span></span></div>
<div class="chip" style="left:217.1px;top:795.3px;width:195.9px;height:43.700px"><i></i><span class="t"><span style="font-size:16.28px;letter-spacing:-0.789px">DPM++ SDE Karras</span></span></div>
<div class="chip" style="left:415.1px;top:795.3px;width:219.9px;height:43.700px"><i></i><span class="t"><span style="font-size:16.28px;letter-spacing:-0.829px">DPM++ 2M SDE Karras</span></span></div>
<div class="chip" style="left:636.6px;top:795.3px;width:101.4px;height:43.700px"><i></i><span class="t"><span style="font-size:16.28px;letter-spacing:-0.772px">DDIM</span></span></div>
<div class="chip" style="left:739.6px;top:795.3px;width:101.9px;height:43.700px"><i></i><span class="t"><span style="font-size:16.28px;letter-spacing:-1.330px">PLMS</span></span></div>
<div class="chip" style="left:843.6px;top:795.3px;width:106.9px;height:43.700px"><i></i><span class="t"><span style="font-size:16.28px;letter-spacing:-0.606px">UniPC</span></span></div>
<div class="cb" style="left:27.5px;top:858px"></div>
<div class="lbl" style="left:57px;top:855.500px">面部修复</div>
<div class="cb" style="left:171px;top:858px"></div>
<div class="lbl" style="left:200.5px;top:855.500px">平铺图<span style="font-size:16.28px;letter-spacing:0.150px"> (Tiling)</span></div>
<div class="cb" style="left:352px;top:858px"></div>
<div class="lbl" style="left:381.5px;top:855.500px">高分辨率修复<span style="font-size:16.28px;letter-spacing:-0.128px"> (Hires. fix)</span></div>
<div class="lbl" style="left:27px;top:893px">宽度</div>
<div class="num" style="left:781px;top:894px;width:104.5px"><span style="font-size:16.28px;letter-spacing:0.000px">512</span></div>
<div class="trk" style="left:27.5px;top:933px;width:857px"></div>
<div class="fil" style="left:27.5px;top:933px;width:200px"></div>
<div class="thb" style="left:217.5px;top:928px"></div>
<div class="lbl" style="left:27px;top:962px">高度</div>
<div class="num" style="left:781px;top:963px;width:104.5px"><span style="font-size:16.28px;letter-spacing:0.000px">512</span></div>
<div class="trk" style="left:27.5px;top:1003px;width:857px"></div>
<div class="fil" style="left:27.5px;top:1003px;width:200px"></div>
<div class="thb" style="left:217.5px;top:998px"></div>
<div class="btn" style="left:906px;top:935px;width:44px;height:48px"></div>
<svg style="left:919px;top:950px" width="18" height="18" viewBox="0 0 18 18"><g fill="none" stroke="#fff" stroke-width="2" stroke-linejoin="miter"><path d="M5.600 16.500V2.800M2 6.500l3.600-3.700 3.600 3.700"/><path d="M12.400 1.500v13.700M8.800 11.500l3.600 3.700 3.600-3.700"/></g></svg>
<div class="lbl" style="left:970px;top:893px">总批次数</div>
<div class="num" style="left:1101.5px;top:894px;width:104.5px"><span style="font-size:16.28px;letter-spacing:0.000px">1</span></div>
<div class="trk" style="left:970.5px;top:933px;width:235px"></div>
<div class="fil" style="left:970.5px;top:933px;width:9.5px"></div>
<div class="thb" style="left:970px;top:928px"></div>
<div class="lbl" style="left:970px;top:962px">单批数量</div>
<div class="num" style="left:1101.5px;top:963px;width:104.5px"><span style="font-size:16.28px;letter-spacing:0.000px">1</span></div>
<div class="trk" style="left:970.5px;top:1003px;width:235px"></div>
<div class="fil" style="left:970.5px;top:1003px;width:9.5px"></div>
<div class="thb" style="left:970px;top:998px"></div>
<div class="lbl" style="left:27px;top:1028px">提示词引导系数<span style="font-size:16.28px;letter-spacing:-0.746px"> (CFG Scale)</span></div>
<div class="num" style="left:1101.5px;top:1028px;width:104.5px"><span style="font-size:16.28px;letter-spacing:0.000px">7</span></div>
<div class="trk" style="left:27.5px;top:1067px;width:1178px"></div>
<div class="fil" style="left:27.5px;top:1067px;width:249px"></div>
<div class="thb" style="left:266.5px;top:1062px"></div>
<div class="a" style="left:1227px;top:596px;width:1199.500px;height:464px;border-radius:10px;background:#111827"></div>
<div class="a" style="left:1237px;top:606px;width:1179px;height:322px;border:1px solid #374151;border-radius:3px;background:#1f2937"></div>
<svg style="left:1815.100px;top:755.100px" width="22.900" height="22.900" viewBox="0 0 24 24" fill="none" stroke="#949ba9" stroke-width="1.650" stroke-linecap="round" stroke-linejoin="round"><rect x="2" y="2" width="20" height="20" rx="2.500"/><circle cx="8" cy="8" r="1.600"/><path d="M21.500 14.500l-5.500-5.500L4.500 21.500"/></svg>
<div class="big" style="left:1237px;top:948px;width:179px;height:82px;line-height:81.400px"></div>
<div class="big" style="left:1436px;top:948px;width:180px;height:82px;line-height:81.400px">保存</div>
<div class="big" style="left:1636px;top:948px;width:180px;height:82px;line-height:81.400px">打包下载</div>
<div class="big" style="left:1836px;top:948px;width:180px;height:82px;line-height:81.400px">发送到 图生图</div>
<div class="big" style="left:2036px;top:948px;width:180px;height:82px;line-height:81.400px">发送到 重绘</div>
<div class="big" style="left:2236px;top:948px;width:180px;height:82px;line-height:30.600px;padding-top:10.800px">发送到 后期处<br>理</div>
<svg style="left:1314.800px;top:980.900px" width="21" height="19" viewBox="0 0 21 20" preserveAspectRatio="none"><path d="M1.500 2.500c0-.8.600-1.400 1.400-1.400h4.400c.5 0 .9.200 1.200.6l1.100 1.500h6.900c.8 0 1.400.6 1.400 1.400v11.400H1.500z" fill="#ffb02e"/><path d="M3.900 7.200c.2-.7.800-1.100 1.500-1.100h13.700c1 0 1.700.9 1.500 1.900l-2.200 9.400c-.2.700-.8 1.200-1.500 1.200H2.700c-.8 0-1.400-.8-1.200-1.600z" fill="#fcd53f"/></svg>
</body></html>
